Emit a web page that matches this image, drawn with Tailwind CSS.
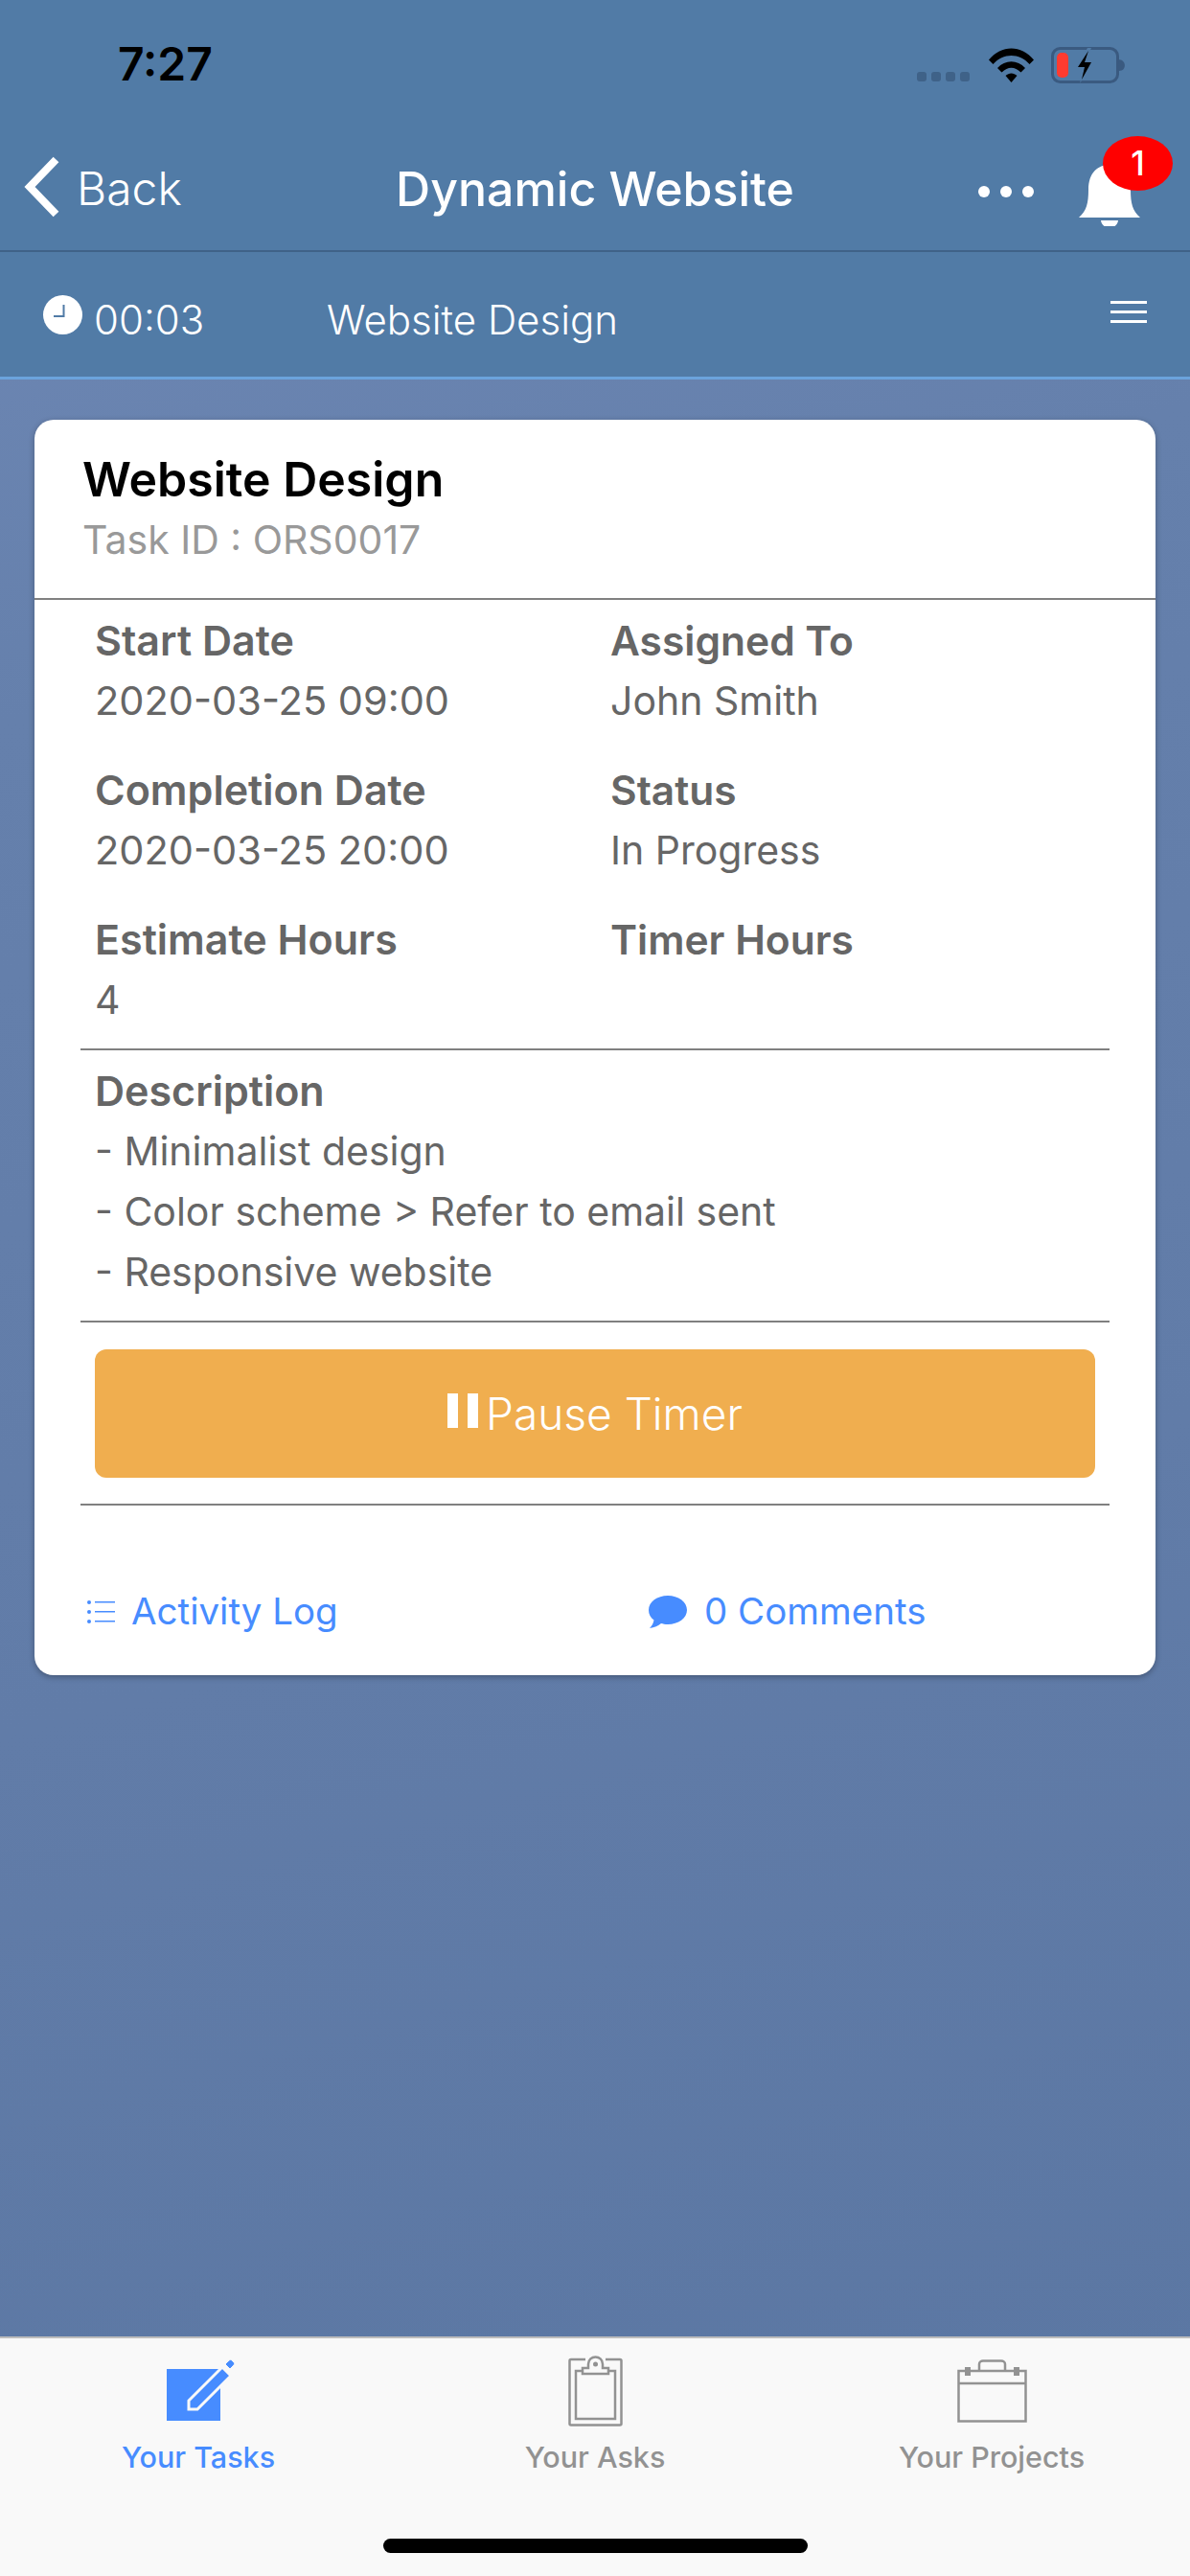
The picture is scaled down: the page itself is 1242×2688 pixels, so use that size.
<!DOCTYPE html>
<html lang="en">
<head>
  <meta charset="UTF-8">
  <meta name="viewport" content="width=device-width, initial-scale=1.0">
  <title>Dynamic Website</title>
  <script src="https://cdn.jsdelivr.net/npm/@tailwindcss/browser@4"></script>
</head>
<body class="font-['Inter',sans-serif]">
  <div class="w-[1242px] h-[2688px] flex flex-col overflow-hidden bg-[linear-gradient(165deg,#7089b6_0%,#6580ac_25%,#617ca8_60%,#5a76a2_100%)]">

    <!-- Header -->
    <header class="bg-[#517ba6] border-b-[3px] border-[#6ba3dc]">
      <!-- Status bar -->
      <div class="h-[132px] flex items-start justify-between pt-[41px] pl-[123px] pr-[65px]">
        <span class="text-[48px] leading-[52px] font-semibold text-black">7:27</span>
        <div class="flex items-start">
          <div class="flex gap-[5px] mt-[34px]">
            <span class="w-[10px] h-[10px] rounded-[3px] bg-[#3f6288]"></span>
            <span class="w-[10px] h-[10px] rounded-[3px] bg-[#3f6288]"></span>
            <span class="w-[10px] h-[10px] rounded-[3px] bg-[#3f6288]"></span>
            <span class="w-[10px] h-[10px] rounded-[3px] bg-[#3f6288]"></span>
          </div>
          <svg class="ml-[20px] mt-[9px]" width="47" height="36" viewBox="0 0 47 36">
            <path d="M0 12.500C13 -3.500 34 -3.500 47 12.500L42.500 17C32 5 15 5 4.500 17Z" fill="#000"/>
            <path d="M9 21C17 12 30 12 38 21L33.500 25.500C27 19 20 19 13.500 25.500Z" fill="#000"/>
            <path d="M17.500 29C21 25.500 26 25.500 29.500 29L23.500 36Z" fill="#000"/>
          </svg>
          <svg class="ml-[18px] mt-[8px]" width="80" height="38" viewBox="0 0 80 38">
            <rect x="1.500" y="1.500" width="68" height="35" rx="8" fill="none" stroke="#3a5a80" stroke-width="3"/>
            <rect x="6" y="6" width="12" height="26" rx="5" fill="#ff3b30"/>
            <path d="M70 13C79 13 79 25 71 25" fill="#3a5a80"/>
            <path d="M38 1L26 22H34L30 38L44 15H36L42 1Z" fill="#517ba6"/>
            <path d="M39 4L28 21H35L32 34L42 16H35Z" fill="#000"/>
          </svg>
        </div>
      </div>

      <!-- Nav bar -->
      <nav class="h-[131px] border-b-2 border-[#3f6288] grid grid-cols-[1fr_auto_1fr] items-center text-white">
        <div class="flex items-center pl-[25px]">
          <svg class="mb-[4px]" width="38" height="64" viewBox="0 0 38 64">
            <path d="M33.500 3.500L6 32L33.500 60.500" fill="none" stroke="#fff" stroke-width="8"/>
          </svg>
          <span class="ml-[17px] text-[48px] leading-[60px] font-light">Back</span>
        </div>
        <h1 class="text-[50px] leading-[60px] font-medium">Dynamic Website</h1>
        <div class="flex items-center justify-end">
          <div class="flex gap-[11px] mr-[47px] mb-[-6px]">
            <span class="w-[12px] h-[12px] rounded-full bg-white"></span>
            <span class="w-[12px] h-[12px] rounded-full bg-white"></span>
            <span class="w-[12px] h-[12px] rounded-full bg-white"></span>
          </div>
          <div class="relative w-[64px] h-[66px] mr-[52px] mt-[12px]">
            <svg width="64" height="66" viewBox="0 0 64 66">
              <path d="M0 57C8 50 10 42 10 28C10 10 20 2 32 2C44 2 54 10 54 28C54 42 56 50 64 57Z" fill="#fff"/>
              <path d="M23 60H41C40 70 24 70 23 60Z" fill="#fff"/>
            </svg>
            <span class="absolute left-[25px] top-[-28px] w-[73px] h-[57px] rounded-[50%] bg-[#ff0000] flex items-center justify-center text-[35px] font-medium text-white">1</span>
          </div>
        </div>
      </nav>

      <!-- Timer row -->
      <div class="h-[130px] flex items-center text-white text-[42px] font-light">
        <svg class="ml-[45px]" width="41" height="41" viewBox="0 0 41 41">
          <circle cx="20.500" cy="20.500" r="20.500" fill="#fff"/>
          <path d="M21.500 10V22H11" fill="none" stroke="#517ba6" stroke-width="2"/>
        </svg>
        <span class="ml-[12px] w-[243px] mt-[10px]">00:03</span>
        <span class="mt-[10px]">Website Design</span>
        <div class="ml-auto mr-[45px] mb-[6px] w-[38px] flex flex-col gap-[7px]">
          <span class="h-[3px] bg-white"></span>
          <span class="h-[3px] bg-white"></span>
          <span class="h-[3px] bg-white"></span>
        </div>
      </div>
    </header>

    <!-- Card -->
    <main class="flex-1 px-[36px] pt-[42px]">
      <div class="h-[1310px] bg-white rounded-[20px] shadow-[0_2px_6px_rgba(0,0,0,0.3)]">
        <div class="h-[188px] border-b-2 border-[#808080] pl-[50px] pt-[35px]">
          <div class="text-[50px] leading-[54px] font-semibold text-black">Website Design</div>
          <div class="mt-[9px] text-[41px] leading-[54px] text-[#999]">Task ID : ORS0017</div>
        </div>

        <div class="mx-[48px] text-[41px] leading-[63px] text-[#666]">
          <div class="grid grid-cols-[538px_1fr] gap-y-[30px] px-[15px] pt-[11px] pb-[19px] border-b-2 border-[#808080]">
            <div><div class="text-[43px] font-semibold">Start Date</div><div class="text-[41.500px]">2020-03-25 09:00</div></div>
            <div><div class="text-[42.500px] font-semibold">Assigned To</div><div>John Smith</div></div>
            <div><div class="text-[43px] font-semibold">Completion Date</div><div class="text-[41.500px]">2020-03-25 20:00</div></div>
            <div><div class="text-[42.500px] font-semibold">Status</div><div>In Progress</div></div>
            <div><div class="text-[43px] font-semibold">Estimate Hours</div><div>4</div></div>
            <div><div class="text-[42.500px] font-semibold">Timer Hours</div></div>
          </div>

          <div class="px-[15px] pt-[11px] pb-[19px] border-b-2 border-[#808080]">
            <div class="text-[43px] font-semibold">Description</div>
            <div>- Minimalist design</div>
            <div>- Color scheme &gt; Refer to email sent</div>
            <div>- Responsive website</div>
          </div>

          <div class="px-[15px] pt-[28px] pb-[27px] border-b-2 border-[#808080]">
            <button class="w-full h-[134px] rounded-[12px] bg-[#f0ae4f] flex items-center justify-center text-white text-[46px] font-light">
              <svg class="mr-[8px] mb-[6px]" width="32" height="36" viewBox="0 0 32 36">
                <rect x="0" y="0" width="11" height="36" fill="#fff"/>
                <rect x="21" y="0" width="11" height="36" fill="#fff"/>
              </svg>
              <span>Pause Timer</span>
            </button>
          </div>
        </div>

        <div class="mt-[79px] flex items-center text-[38.500px] leading-[63px] text-[#478cff]">
          <svg class="ml-[55px]" width="30" height="26" viewBox="0 0 30 26">
            <g fill="#478cff">
              <circle cx="2" cy="3" r="2"/>
              <circle cx="2" cy="13" r="2"/>
              <circle cx="2" cy="23" r="2"/>
              <rect x="8" y="2" width="21" height="1.500"/>
              <rect x="8" y="12" width="21" height="1.500"/>
              <rect x="8" y="22" width="21" height="1.500"/>
            </g>
          </svg>
          <span class="ml-[16px] w-[530px]">Activity Log</span>
          <svg class="ml-[10px]" width="40" height="34" viewBox="0 0 40 34">
            <path d="M20 0C31 0 40 6.500 40 15C40 23.500 31 30 20 30C17 30 15 29.500 13 29C10 31.500 6 33.500 1 34C3.500 31.500 5 28.500 5.500 25.500C2 23 0 19.500 0 15C0 6.500 9 0 20 0Z" fill="#478cff"/>
          </svg>
          <span class="ml-[18px]">0 Comments</span>
        </div>
      </div>
    </main>

    <!-- Tab bar -->
    <footer class="h-[250px] shrink-0 bg-[#f9f9f9] border-t-2 border-[#bdbdbd] flex flex-col">
      <div class="grid grid-cols-3 text-[30.500px] leading-[36px] font-medium text-[#929292]">
        <div class="flex flex-col items-center text-[#478cff]">
          <svg class="mt-[21px] ml-[10px]" width="76" height="74" viewBox="0 0 76 74">
            <rect x="0" y="11" width="56" height="54" fill="#478cff"/>
            <path d="M23 44L58 9L67 18L32 53H23Z" fill="#478cff" stroke="#f9f9f9" stroke-width="3"/>
            <path d="M61 6L64 3C66 1 67 1 68 2L70 4C71 5 71 6 69 8L66 11Z" fill="#478cff" stroke="#f9f9f9" stroke-width="1"/>
            <path d="M58 9L61 6L70 15L67 18Z" fill="#f9f9f9"/>
            <path d="M27 44L56 15L61 20L32 49H27Z" fill="#478cff"/>
          </svg>
          <span class="mt-[11px]">Your Tasks</span>
        </div>
        <div class="flex flex-col items-center">
          <svg class="mt-[18px]" width="57" height="74" viewBox="0 0 57 74">
            <g fill="none" stroke="#929292" stroke-width="2.500">
              <path d="M18 4H3C2 4 1.500 4.500 1.500 5.500V71C1.500 72 2 72.500 3 72.500H54C55 72.500 55.500 72 55.500 71V5.500C55.500 4.500 55 4 54 4H39"/>
              <path d="M15 16H8V66H49V16H42"/>
              <path d="M15 19V13H21V9C21 -1 36 -1 36 9V13H42V19Z"/>
            </g>
            <circle cx="28.500" cy="9" r="2.500" fill="#929292"/>
          </svg>
          <span class="mt-[14px]">Your Asks</span>
        </div>
        <div class="flex flex-col items-center">
          <svg class="mt-[22px]" width="73" height="66" viewBox="0 0 73 66">
            <g fill="none" stroke="#929292" stroke-width="2.500">
              <rect x="1.500" y="12" width="70" height="52.500"/>
              <path d="M1.500 25H71.500"/>
              <path d="M23 12V5C23 3 25 1.500 27 1.500H46C48 1.500 50 3 50 5V12"/>
            </g>
            <rect x="8" y="8" width="6" height="9" fill="#929292"/>
            <rect x="59" y="8" width="6" height="9" fill="#929292"/>
          </svg>
          <span class="mt-[18px]">Your Projects</span>
        </div>
      </div>
      <div class="mt-auto mb-[24px] mx-auto w-[443px] h-[15px] rounded-full bg-black"></div>
    </footer>
  </div>
</body>
</html>
